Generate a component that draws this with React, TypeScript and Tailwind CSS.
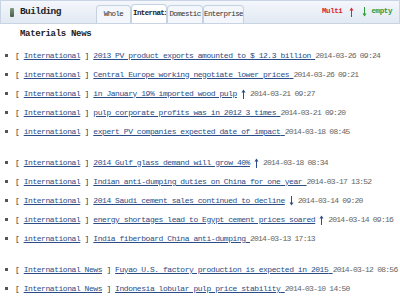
import React from 'react';

type Item = {
  cat: string;
  title: string;
  date: string;
  arrow?: 'up' | 'down';
};

const groups: Item[][] = [
  [
    { cat: 'International', title: '2013 PV product exports amounted to $ 12.3 billion', date: '2014-03-26 09:24' },
    { cat: 'international', title: 'Central Europe working negotiate lower prices', date: '2014-03-26 09:21' },
    { cat: 'International', title: 'in January 19% imported wood pulp', date: '2014-03-21 09:27', arrow: 'up' },
    { cat: 'International', title: 'pulp corporate profits was in 2012 3 times', date: '2014-03-21 09:20' },
    { cat: 'international', title: 'expert PV companies expected date of impact', date: '2014-03-18 08:45' },
  ],
  [
    { cat: 'International', title: '2014 Gulf glass demand will grow 40%', date: '2014-03-18 08:34', arrow: 'up' },
    { cat: 'International', title: 'Indian anti-dumping duties on China for one year', date: '2014-03-17 13:52' },
    { cat: 'International', title: '2014 Saudi cement sales continued to decline', date: '2014-03-14 09:20', arrow: 'down' },
    { cat: 'international', title: 'energy shortages lead to Egypt cement prices soared', date: '2014-03-14 09:16', arrow: 'up' },
    { cat: 'international', title: 'India fiberboard China anti-dumping', date: '2014-03-13 17:13' },
  ],
  [
    { cat: 'International News', title: 'Fuyao U.S. factory production is expected in 2015', date: '2014-03-12 08:56' },
    { cat: 'International News', title: 'Indonesia lobular pulp price stability', date: '2014-03-10 14:50' },
  ],
];

function Arrow({ dir, color }: { dir: 'up' | 'down'; color: string }) {
  return (
    <svg width="5" height="10" viewBox="0 0 5 10" className="inline-block shrink-0 mx-[4px]">
      {dir === 'up' ? (
        <>
          <path d="M2.5 0.5 L0.5 3.5 L4.5 3.5 Z" fill={color} />
          <rect x="2" y="3" width="1" height="7" fill={color} />
        </>
      ) : (
        <>
          <rect x="2" y="0" width="1" height="7" fill={color} />
          <path d="M2.5 9.5 L0.5 6.5 L4.5 6.5 Z" fill={color} />
        </>
      )}
    </svg>
  );
}

function Tab({ label, active, w }: { label: string; active?: boolean; w: string }) {
  return (
    <div
      className={
        w +
        ' overflow-hidden whitespace-nowrap border border-b-0 border-[#c5d2e2] rounded-t-[4px] flex items-center text-[7.5px] tracking-[-0.6px] ' +
        (active ? 'bg-white font-bold text-[#222] h-[19px] justify-start pl-[1px]' : 'bg-[#f3f6fa] text-[#333] h-[18px] justify-center')
      }
    >
      {label}
    </div>
  );
}

export default function App() {
  return (
    <div className="w-[400px] h-[300px] bg-white overflow-hidden text-[#222]" style={{ fontFamily: '"Liberation Mono", monospace' }}>
      <div className="h-[24px] flex items-end border border-[#c8d4e3] bg-gradient-to-b from-[#f4f7fb] to-[#e1e9f3] pl-[9px] pr-[7px]">
        <div className="flex items-center h-full w-[86px]">
          <div className="w-[4px] h-[9px] rounded-[1px] bg-gradient-to-b from-[#7e9a7e] to-[#4b5f4b] mr-[6px]" />
          <span className="text-[9.5px] font-bold tracking-[-0.6px]">Building</span>
        </div>
        <div className="flex items-end">
          <Tab label="Whole" w="w-[35px]" />
          <Tab label="International" active w="w-[36px]" />
          <Tab label="Domestic" w="w-[36px]" />
          <Tab label="Enterprise" w="w-[41px]" />
        </div>
        <div className="ml-auto h-full flex items-center text-[7.5px] font-bold tracking-[-0.4px]">
          <span className="text-[#d9262b] mr-[3px]">Multi</span>
          <Arrow dir="up" color="#d9262b" />
          <Arrow dir="down" color="#2e9a3a" />
          <span className="text-[#2e9a3a]">empty</span>
        </div>
      </div>
      <div className="h-[22px] flex items-center pl-[20px] text-[9px] font-bold tracking-[-0.3px]">Materials News</div>
      <div className="text-[8px] tracking-[-0.45px]">
        {groups.map((g, gi) => (
          <div key={gi} className={gi > 0 ? 'mt-[12px]' : ''}>
            {g.map((it, i) => (
              <div key={i} className="h-[19px] flex items-center whitespace-nowrap pl-[5px]">
                <span className="w-[3px] h-[3px] bg-[#555] mr-[7px] shrink-0" />
                <span className="text-[#333] shrink-0">[&nbsp;</span>
                <span className="text-[#2c4c86] underline decoration-[#2c4c86] shrink-0">{it.cat}</span>
                <span className="text-[#333] shrink-0">&nbsp;]&nbsp;</span>
                <span className="text-[#2c4c86] underline decoration-[#2c4c86] shrink-0">
                  {it.title}
                  {it.arrow ? '' : '\u00a0'}
                </span>
                {it.arrow && <Arrow dir={it.arrow} color="#2c4c86" />}
                <span className="text-[#666] shrink-0 tracking-[-0.75px]">{it.date}</span>
              </div>
            ))}
          </div>
        ))}
      </div>
    </div>
  );
}
